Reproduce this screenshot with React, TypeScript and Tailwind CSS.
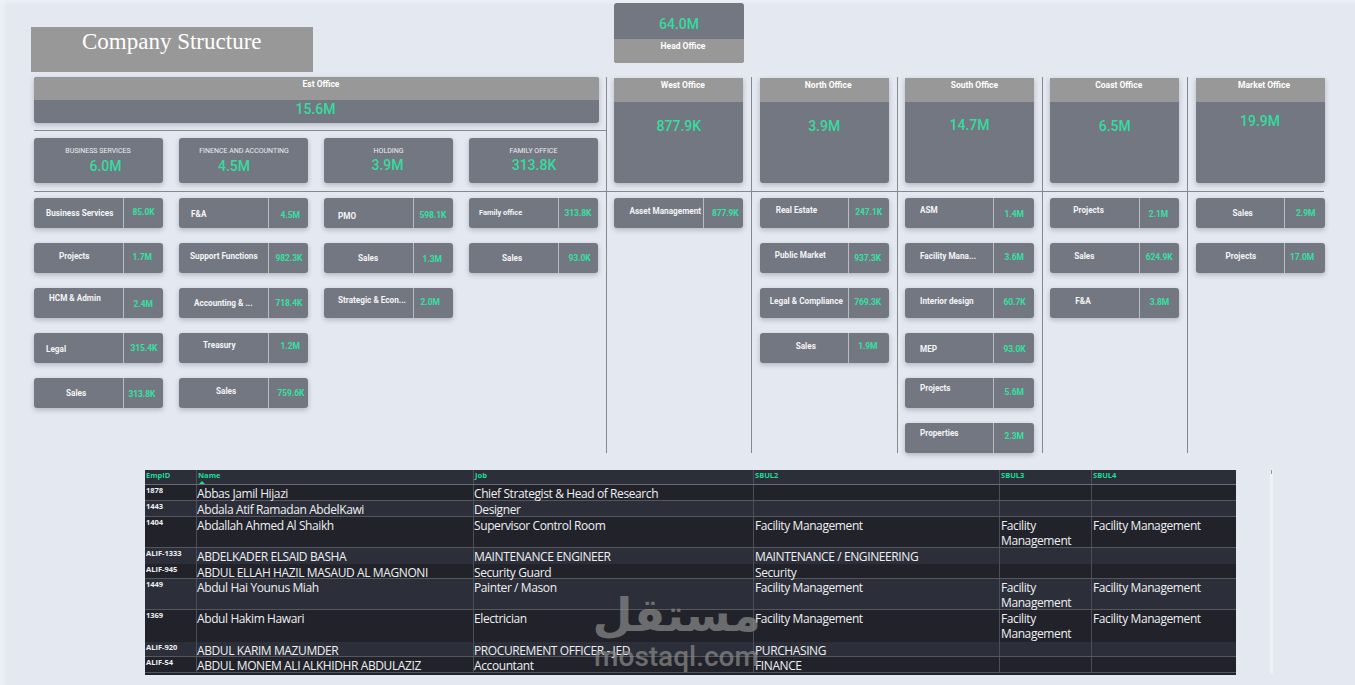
type Tile = { label: string; value: string; l: string; v: string; small?: boolean };

const sans = "font-['Roboto','Liberation_Sans',sans-serif]";
const body = "font-['Open_Sans','Liberation_Sans',sans-serif]";

const leftCols: Tile[][] = [
  [
    { label: 'Business Services', value: '85.0K', l: 'pl-[12px] pt-[9px]', v: 'pl-[9px] pt-[8px]' },
    { label: 'Projects', value: '1.7M', l: 'pl-[25px] pt-[7px]', v: 'pl-[9px] pt-[8px]' },
    { label: 'HCM & Admin', value: '2.4M', l: 'pl-[15px] pt-[4px]', v: 'pl-[10px] pt-[10px]' },
    { label: 'Legal', value: '315.4K', l: 'pl-[12px] pt-[10px]', v: 'pl-[7px] pt-[9px]' },
    { label: 'Sales', value: '313.8K', l: 'pl-[32px] pt-[9px]', v: 'pl-[5px] pt-[10px]' },
  ],
  [
    { label: 'F&A', value: '4.5M', l: 'pl-[12px] pt-[10px]', v: 'pl-[12px] pt-[11px]' },
    { label: 'Support Functions', value: '982.3K', l: 'pl-[11px] pt-[7px]', v: 'pl-[7px] pt-[9px]' },
    { label: 'Accounting & ...', value: '718.4K', l: 'pl-[15px] pt-[9px]', v: 'pl-[7px] pt-[9px]' },
    { label: 'Treasury', value: '1.2M', l: 'pl-[24px] pt-[6px]', v: 'pl-[12px] pt-[7px]' },
    { label: 'Sales', value: '759.6K', l: 'pl-[37px] pt-[7px]', v: 'pl-[9px] pt-[9px]' },
  ],
  [
    { label: 'PMO', value: '598.1K', l: 'pl-[14px] pt-[12px]', v: 'pl-[6px] pt-[11px]' },
    { label: 'Sales', value: '1.3M', l: 'pl-[34px] pt-[9px]', v: 'pl-[9px] pt-[10px]' },
    { label: 'Strategic & Econ...', value: '2.0M', l: 'pl-[14px] pt-[6px]', v: 'pl-[7px] pt-[8px]' },
  ],
  [
    { label: 'Family office', value: '313.8K', l: 'pl-[10px] pt-[9px]', v: 'pl-[6px] pt-[9px]', small: true },
    { label: 'Sales', value: '93.0K', l: 'pl-[33px] pt-[9px]', v: 'pl-[10px] pt-[9px]' },
  ],
];

const offices = [
  {
    name: 'West Office', value: '877.9K', n: 'pl-[8px]', c: 'pt-[15px]',
    tiles: [{ label: 'Asset Management', value: '877.9K', l: 'pl-[15px] pt-[7px]', v: 'pl-[8px] pt-[9px]' }],
  },
  {
    name: 'North Office', value: '3.9M', n: 'pl-[8px]', c: 'pt-[15px]',
    tiles: [
      { label: 'Real Estate', value: '247.1K', l: 'pl-[16px] pt-[6px]', v: 'pl-[6px] pt-[8px]' },
      { label: 'Public Market', value: '937.3K', l: 'pl-[15px] pt-[6px]', v: 'pl-[5px] pt-[9px]' },
      { label: 'Legal & Compliance', value: '769.3K', l: 'pl-[10px] pt-[7px]', v: 'pl-[5px] pt-[8px]' },
      { label: 'Sales', value: '1.9M', l: 'pl-[36px] pt-[7px]', v: 'pl-[9px] pt-[7px]' },
    ],
  },
  {
    name: 'South Office', value: '14.7M', n: 'pl-[10px]', c: 'pt-[14px]',
    tiles: [
      { label: 'ASM', value: '1.4M', l: 'pl-[15px] pt-[6px]', v: 'pl-[10px] pt-[10px]' },
      { label: 'Facility Mana...', value: '3.6M', l: 'pl-[15px] pt-[7px]', v: 'pl-[10px] pt-[8px]' },
      { label: 'Interior design', value: '60.7K', l: 'pl-[15px] pt-[7px]', v: 'pl-[9px] pt-[8px]' },
      { label: 'MEP', value: '93.0K', l: 'pl-[15px] pt-[10px]', v: 'pl-[9px] pt-[10px]' },
      { label: 'Projects', value: '5.6M', l: 'pl-[15px] pt-[4px]', v: 'pl-[10px] pt-[8px]' },
      { label: 'Properties', value: '2.3M', l: 'pl-[15px] pt-[4px]', v: 'pl-[10px] pt-[7px]' },
    ],
  },
  {
    name: 'Coast Office', value: '6.5M', n: 'pl-[8px]', c: 'pt-[15px]',
    tiles: [
      { label: 'Projects', value: '2.1M', l: 'pl-[23px] pt-[6px]', v: 'pl-[9px] pt-[10px]' },
      { label: 'Sales', value: '624.9K', l: 'pl-[24px] pt-[7px]', v: 'pl-[6px] pt-[8px]' },
      { label: 'F&A', value: '3.8M', l: 'pl-[25px] pt-[7px]', v: 'pl-[10px] pt-[8px]' },
    ],
  },
  {
    name: 'Market Office', value: '19.9M', n: 'pl-[8px]', c: 'pt-[10px]',
    tiles: [
      { label: 'Sales', value: '2.9M', l: 'pl-[37px] pt-[9px]', v: 'pl-[11px] pt-[9px]' },
      { label: 'Projects', value: '17.0M', l: 'pl-[30px] pt-[7px]', v: 'pl-[5px] pt-[8px]' },
    ],
  },
];

const groups = [
  { name: 'BUSINESS SERVICES', value: '6.0M', vc: 'pl-[14px] pt-[1px]', nc: 'pr-[1px]' },
  { name: 'FINENCE AND ACCOUNTING', value: '4.5M', vc: 'pr-[19px] pt-[1px]', nc: 'pl-[1px]' },
  { name: 'HOLDING', value: '3.9M', vc: 'pr-[2px]', nc: '' },
  { name: 'FAMILY OFFICE', value: '313.8K', vc: 'pl-[1px]', nc: '' },
];

const dark = 'bg-[#22232a]';
const light = 'bg-[#2c2f39]';
const line = 'border-b border-[#55575f]';

const rows = [
  { id: '1878', name: 'Abbas Jamil Hijazi', job: 'Chief Strategist & Head of Research', s2: '', s3: '', s4: '', h: 'h-[16px]', bg: dark, line },
  { id: '1443', name: 'Abdala Atif Ramadan AbdelKawi', job: 'Designer', s2: '', s3: '', s4: '', h: 'h-[16px]', bg: light, line },
  { id: '1404', name: 'Abdallah Ahmed Al Shaikh', job: 'Supervisor Control Room', s2: 'Facility Management', s3: 'Facility Management', s4: 'Facility Management', h: 'h-[31px]', bg: dark, line },
  { id: 'ALIF-1333', name: 'ABDELKADER ELSAID BASHA', job: 'MAINTENANCE ENGINEER', s2: 'MAINTENANCE / ENGINEERING', s3: '', s4: '', h: 'h-[16px]', bg: light, line: '' },
  { id: 'ALIF-945', name: 'ABDUL ELLAH HAZIL MASAUD AL MAGNONI', job: 'Security Guard', s2: 'Security', s3: '', s4: '', h: 'h-[15px]', bg: dark, line },
  { id: '1449', name: 'Abdul Hai Younus Miah', job: 'Painter / Mason', s2: 'Facility Management', s3: 'Facility Management', s4: 'Facility Management', h: 'h-[31px]', bg: light, line },
  { id: '1369', name: 'Abdul Hakim Hawari', job: 'Electrician', s2: 'Facility Management', s3: 'Facility Management', s4: 'Facility Management', h: 'h-[32px]', bg: dark, line: '' },
  { id: 'ALIF-920', name: 'ABDUL KARIM MAZUMDER', job: 'PROCUREMENT OFFICER - JED', s2: 'PURCHASING', s3: '', s4: '', h: 'h-[15px]', bg: light, line },
  { id: 'ALIF-54', name: 'ABDUL MONEM ALI ALKHIDHR ABDULAZIZ', job: 'Accountant', s2: 'FINANCE', s3: '', s4: '', h: 'h-[16px]', bg: dark, line },
];

function TileCard({ tile }: { tile: Tile }) {
  return (
    <div className={`flex h-[30px] w-[129px] rounded-[3px] bg-[#737782] shadow-[0_2px_5px_rgba(60,65,80,0.3)] ${sans}`}>
      <div className={`w-[88.5px] whitespace-nowrap font-bold leading-[12px] text-[#f3f4f6] ${tile.small ? 'text-[7.5px]' : 'text-[8.2px]'} ${tile.l}`}>
        {tile.label}
      </div>
      <div className={`flex-1 whitespace-nowrap border-l border-[#b9bcc4] text-[8.5px] font-bold leading-[12px] tracking-[-0.1px] text-[#35e0a0] ${tile.v}`}>
        {tile.value}
      </div>
    </div>
  );
}

function TileStack({ tiles }: { tiles: Tile[] }) {
  return (
    <div className="flex w-[129px] flex-col gap-[15px]">
      {tiles.map((t) => (
        <TileCard key={t.label + t.value} tile={t} />
      ))}
    </div>
  );
}

export default function App() {
  return (
    <div className={`relative h-[685px] w-[1355px] overflow-hidden bg-[#e4e8f1] shadow-[inset_5px_3px_3px_rgba(255,255,255,0.3)] ${sans}`}>
      {/* Top row */}
      <div className="flex h-[77px]">
        <div className="ml-[31px] mt-[27px] h-[45px] w-[282px] bg-[#999898] pl-[51px] pt-[1px] font-['Liberation_Serif',serif] text-[23px] leading-[28px] text-white">
          Company Structure
        </div>
        <div className="ml-[301px] mt-[3px] h-[60px] w-[130px] overflow-hidden rounded-[3px] bg-[#737782]">
          <div className="h-[36px] pt-[12px] text-center text-[14px] font-medium leading-[18px] text-[#35dc9d]">64.0M</div>
          <div className="h-[24px] bg-[#999898] pl-[8px] pt-[1px] text-center text-[8.5px] font-bold leading-[12px] text-white">Head Office</div>
        </div>
      </div>

      {/* Office cards */}
      <div className="flex h-[114px] w-[1355px] pl-[34px]">
        <div className="w-[573px] shrink-0 border-r border-[#85888f]">
          <div className="h-[46px] w-[565px] overflow-hidden rounded-[3px] bg-[#737782] shadow-[0_2px_5px_rgba(60,65,80,0.3)]">
            <div className="h-[23px] bg-[#999898] pl-[9px] pt-[1px] text-center text-[8.5px] font-bold leading-[12px] text-white">Est Office</div>
            <div className="pr-[2px] text-center text-[14px] font-medium leading-[18px] text-[#35dc9d]">15.6M</div>
          </div>
          <div className="mt-[7px] h-px bg-[#85888f]" />
          <div className="mt-[7px] flex gap-[16px]">
            {groups.map((g) => (
              <div key={g.name} className="h-[45px] w-[129px] rounded-[3px] bg-[#737782] pt-[8px] text-center shadow-[0_2px_5px_rgba(60,65,80,0.3)]">
                <div className={`text-[7px] leading-[10px] text-[#eceef2] ${g.nc}`}>{g.name}</div>
                <div className={`text-[14px] font-medium leading-[18px] text-[#35dc9d] ${g.vc}`}>{g.value}</div>
              </div>
            ))}
          </div>
        </div>
        {offices.map((o, i) => (
          <div key={o.name} className={`w-[145.3px] shrink-0 pl-[7.4px] pt-[1px] ${i < 4 ? 'border-r border-[#85888f]' : ''}`}>
            <div className="h-[105px] w-[129px] overflow-hidden rounded-b-[3px] bg-[#737782] shadow-[0_2px_5px_rgba(60,65,80,0.3)]">
              <div className={`h-[24px] bg-[#999898] pt-[1px] text-center text-[8.5px] font-bold leading-[12px] text-white ${o.n}`}>{o.name}</div>
              <div className={`text-center text-[14px] font-medium leading-[18px] text-[#35dc9d] ${o.c}`}>{o.value}</div>
            </div>
          </div>
        ))}
      </div>

      {/* Tile columns */}
      <div className="ml-[34px] h-px w-[1290px] bg-[#85888f]" />
      <div className="flex h-[261px] w-[1321px] pl-[34px] ">
        <div className="flex w-[573px] shrink-0 gap-[16px] border-r border-[#85888f] pt-[6px]">
          {leftCols.map((tiles, i) => (
            <TileStack key={i} tiles={tiles} />
          ))}
        </div>
        {offices.map((o, i) => (
          <div key={o.name} className={`w-[145.3px] shrink-0 pl-[7.4px] pt-[6px] ${i < 4 ? 'border-r border-[#85888f]' : ''}`}>
            <TileStack tiles={o.tiles} />
          </div>
        ))}
      </div>

      {/* Employee table */}
      <div className={`ml-[145px] mt-[17px] h-[205px] w-[1091px] overflow-hidden bg-[#22232a] text-[#eef0f3] ${body}`}>
        <div className="flex h-[15px] border-b border-[#6a6c74] bg-[#2c2f39] text-[7.5px] font-bold leading-[11px] text-[#1fdc94]">
          <div className="w-[51px] pl-[1px]">EmpID</div>
          <div className="relative w-[277px] border-l border-[#4d4f58] pl-[1px]">
            Name
            <span className="absolute left-[2px] top-[11px] h-0 w-0 border-x-[3px] border-b-[3px] border-x-transparent border-b-[#1fdc94]" />
          </div>
          <div className="w-[280px] border-l border-[#4d4f58] pl-[1px]">Job</div>
          <div className="w-[246px] border-l border-[#4d4f58] pl-[1px]">SBUL2</div>
          <div className="w-[92px] border-l border-[#4d4f58] pl-[1px]">SBUL3</div>
          <div className="w-[145px] border-l border-[#4d4f58] pl-[1px]">SBUL4</div>
        </div>
        {rows.map((r) => (
          <div key={r.id} className={`flex text-[12px] leading-[15px] tracking-[-0.4px] ${r.h} ${r.bg} ${r.line}`}>
            <div className="w-[51px] pl-[1px] text-[7.5px] font-bold leading-[11px] tracking-normal">{r.id}</div>
            <div className="w-[277px] whitespace-nowrap border-l border-[#4d4f58] pt-[1px]">{r.name}</div>
            <div className="w-[280px] whitespace-nowrap border-l border-[#4d4f58] pt-[1px]">{r.job}</div>
            <div className="w-[246px] whitespace-nowrap border-l border-[#4d4f58] pl-[1px] pt-[1px]">{r.s2}</div>
            <div className="w-[92px] border-l border-[#4d4f58] pl-[1px] pt-[1px]">{r.s3}</div>
            <div className="w-[145px] whitespace-nowrap border-l border-[#4d4f58] pl-[1px] pt-[1px]">{r.s4}</div>
          </div>
        ))}
      </div>

      {/* Scroll track */}
      <div className="absolute left-[1270px] top-[469px] h-[205px] w-[3px] rounded-full bg-[#eef1f6]">
        <div className="ml-[1px] mt-[1px] h-[4px] w-px bg-[#8f939c]" />
      </div>

      {/* Watermark */}
      <div className="pointer-events-none absolute left-[589px] top-[587px] w-[175px] text-center text-[#8b8b8b] opacity-70">
        <div dir="rtl" className="font-['DejaVu_Sans',sans-serif] text-[46px] font-bold leading-[56px]">مستقل</div>
        <div className={`text-[28px] font-medium leading-[28px] ${sans}`}>mostaql.com</div>
      </div>
    </div>
  );
}
